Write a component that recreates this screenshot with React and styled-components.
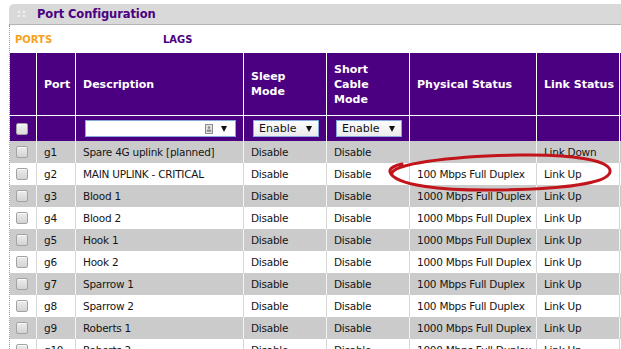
import React from "react";
import styled, { createGlobalStyle } from "styled-components";

const PURPLE = "#4b0082";
const ROW_GRAY = "#cbcbcb";

const GlobalStyle = createGlobalStyle`
  html, body {
    margin: 0;
    padding: 0;
    background: #fff;
    overflow: hidden;
  }
  body {
    font-family: "DejaVu Sans", Verdana, sans-serif;
  }
`;

const Page = styled.div`
  position: relative;
  width: 621px;
  height: 349px;
  overflow: hidden;
  box-sizing: border-box;
  padding: 4px 0 0 9px;
`;

const Panel = styled.section`
  width: 740px;
`;

const PanelHeader = styled.div`
  display: flex;
  align-items: center;
  gap: 10px;
  height: 21px;
  box-sizing: border-box;
  padding-left: 8px;
  background: #d9d9d9;
  border-bottom: 1px solid #b4b4b4;
  border-top-left-radius: 5px;
`;

const Grip = styled.span`
  color: #f6f6f6;
  font-size: 10px;
  font-weight: bold;
  letter-spacing: 1px;
  line-height: 1;
`;

const Title = styled.h1`
  margin: 0;
  color: ${PURPLE};
  font-size: 11.5px;
  font-weight: bold;
  letter-spacing: -0.1px;
`;

const PanelBody = styled.div`
  border-left: 1px dotted #9a9a9a;
`;

const Tabs = styled.div`
  display: flex;
  align-items: center;
  height: 28px;
  padding-left: 5px;
`;

const Tab = styled.span`
  width: 148px;
  font-size: 10px;
  font-weight: bold;
  color: ${(p) => (p.$active ? "#f7a21b" : PURPLE)};
`;

const COLS = "26px 39px 168px 83px 83px 127px 83px 1fr";

const Row = styled.div`
  display: grid;
  grid-template-columns: ${COLS};
  height: ${(p) => p.$height}px;
  background: ${(p) => p.$bg};
  box-sizing: border-box;
  border-bottom: ${(p) => (p.$divider ? "1px solid #fff" : "none")};
`;

const Cell = styled.div`
  display: flex;
  align-items: center;
  padding: 0 7px;
  overflow: hidden;
  white-space: nowrap;
  border-left: 1px solid ${(p) => p.$line};
  &:first-child {
    border-left: none;
    padding: 0 0 0 6px;
  }
`;

const HeadCell = styled(Cell)`
  color: #fff;
  font-size: 11px;
  font-weight: bold;
  line-height: 15px;
`;

const DataCell = styled(Cell)`
  color: #151515;
  font-size: 10.5px;
  letter-spacing: -0.25px;
`;

const Checkbox = styled.span`
  display: inline-block;
  width: 12px;
  height: 12px;
  box-sizing: border-box;
  border: 1px solid #a3a3a3;
  border-radius: 2px;
  background: ${(p) =>
    p.$light
      ? "linear-gradient(#f2f2f2, #dcdcdc)"
      : "linear-gradient(#ececec, #d3d3d3)"};
  box-shadow: inset 0 1px 0 #fafafa;
`;

const Arrow = styled.span`
  width: 0;
  height: 0;
  border-left: 3px solid transparent;
  border-right: 3px solid transparent;
  border-top: 6px solid #111;
`;

const TextInput = styled.div`
  display: flex;
  align-items: center;
  justify-content: flex-end;
  gap: 8px;
  width: 151px;
  height: 17px;
  margin-left: 2px;
  box-sizing: border-box;
  padding-right: 8px;
  background: #fff;
  border: 1px solid #86a9dc;
`;

const Select = styled.div`
  display: flex;
  align-items: center;
  justify-content: space-between;
  width: 66px;
  height: 17px;
  margin-left: 2px;
  box-sizing: border-box;
  padding: 0 6px 0 5px;
  background: linear-gradient(#fdfdfd, #ebebeb);
  border: 1px solid #86a9dc;
  color: #111;
  font-size: 11px;
  font-weight: normal;
`;

const Overlay = styled.svg`
  position: absolute;
  left: 0;
  top: 0;
  pointer-events: none;
`;

const CardIcon = () => (
  <svg width="8" height="10" viewBox="0 0 8 10">
    <rect x="0.5" y="0.5" width="7" height="9" fill="#e4e4e4" stroke="#8c8c8c" />
    <circle cx="4" cy="3.6" r="1.3" fill="#8c8c8c" />
    <rect x="1.8" y="5.6" width="4.4" height="2.2" fill="#8c8c8c" />
  </svg>
);

const ports = [
  { port: "g1", desc: "Spare 4G uplink [planned]", phys: "", link: "Link Down" },
  { port: "g2", desc: "MAIN UPLINK - CRITICAL", phys: "100 Mbps Full Duplex", link: "Link Up" },
  { port: "g3", desc: "Blood 1", phys: "1000 Mbps Full Duplex", link: "Link Up" },
  { port: "g4", desc: "Blood 2", phys: "1000 Mbps Full Duplex", link: "Link Up" },
  { port: "g5", desc: "Hook 1", phys: "1000 Mbps Full Duplex", link: "Link Up" },
  { port: "g6", desc: "Hook 2", phys: "1000 Mbps Full Duplex", link: "Link Up" },
  { port: "g7", desc: "Sparrow 1", phys: "100 Mbps Full Duplex", link: "Link Up" },
  { port: "g8", desc: "Sparrow 2", phys: "100 Mbps Full Duplex", link: "Link Up" },
  { port: "g9", desc: "Roberts 1", phys: "1000 Mbps Full Duplex", link: "Link Up" },
  { port: "g10", desc: "Roberts 2", phys: "1000 Mbps Full Duplex", link: "Link Up" },
];

export default function App() {
  return (
    <Page>
      <GlobalStyle />
      <Panel>
        <PanelHeader>
          <Grip>::</Grip>
          <Title>Port Configuration</Title>
        </PanelHeader>
        <PanelBody>
          <Tabs>
            <Tab $active>PORTS</Tab>
            <Tab>LAGS</Tab>
          </Tabs>

          <Row $height={63} $bg={PURPLE} $divider>
            <HeadCell $line="#fff" />
            <HeadCell $line="#fff">Port</HeadCell>
            <HeadCell $line="#fff">Description</HeadCell>
            <HeadCell $line="#fff">
              Sleep
              <br />
              Mode
            </HeadCell>
            <HeadCell $line="#fff">
              Short
              <br />
              Cable
              <br />
              Mode
            </HeadCell>
            <HeadCell $line="#fff">Physical Status</HeadCell>
            <HeadCell $line="#fff">Link Status</HeadCell>
            <HeadCell $line="#fff" />
          </Row>

          <Row $height={25} $bg={PURPLE}>
            <HeadCell $line="#fff">
              <Checkbox $light />
            </HeadCell>
            <HeadCell $line="#fff" />
            <HeadCell $line="#fff">
              <TextInput>
                <CardIcon />
                <Arrow />
              </TextInput>
            </HeadCell>
            <HeadCell $line="#fff">
              <Select>
                Enable <Arrow />
              </Select>
            </HeadCell>
            <HeadCell $line="#fff">
              <Select>
                Enable <Arrow />
              </Select>
            </HeadCell>
            <HeadCell $line="#fff" />
            <HeadCell $line="#fff" />
            <HeadCell $line="#fff" />
          </Row>

          {ports.map((p, i) => {
            const shaded = i % 2 === 0;
            const line = shaded ? "#f4f4f4" : "#d6d6d6";
            return (
              <Row key={p.port} $height={22} $bg={shaded ? ROW_GRAY : "#fff"}>
                <DataCell $line={line}>
                  <Checkbox />
                </DataCell>
                <DataCell $line={line}>{p.port}</DataCell>
                <DataCell $line={line}>{p.desc}</DataCell>
                <DataCell $line={line}>Disable</DataCell>
                <DataCell $line={line}>Disable</DataCell>
                <DataCell $line={line}>{p.phys}</DataCell>
                <DataCell $line={line}>{p.link}</DataCell>
                <DataCell $line={line} />
              </Row>
            );
          })}
        </PanelBody>
      </Panel>

      <Overlay width="621" height="349" viewBox="0 0 621 349">
        <path
          d="M 392 175 C 388 164, 450 156, 520 155 C 575 154, 612 161, 610 172 C 608 183, 565 189, 500 190 C 440 191, 394 185, 390 172 C 389 168, 396 165, 402 164"
          fill="none"
          stroke="#c2151b"
          strokeWidth="3"
          strokeLinecap="round"
        />
      </Overlay>
    </Page>
  );
}
